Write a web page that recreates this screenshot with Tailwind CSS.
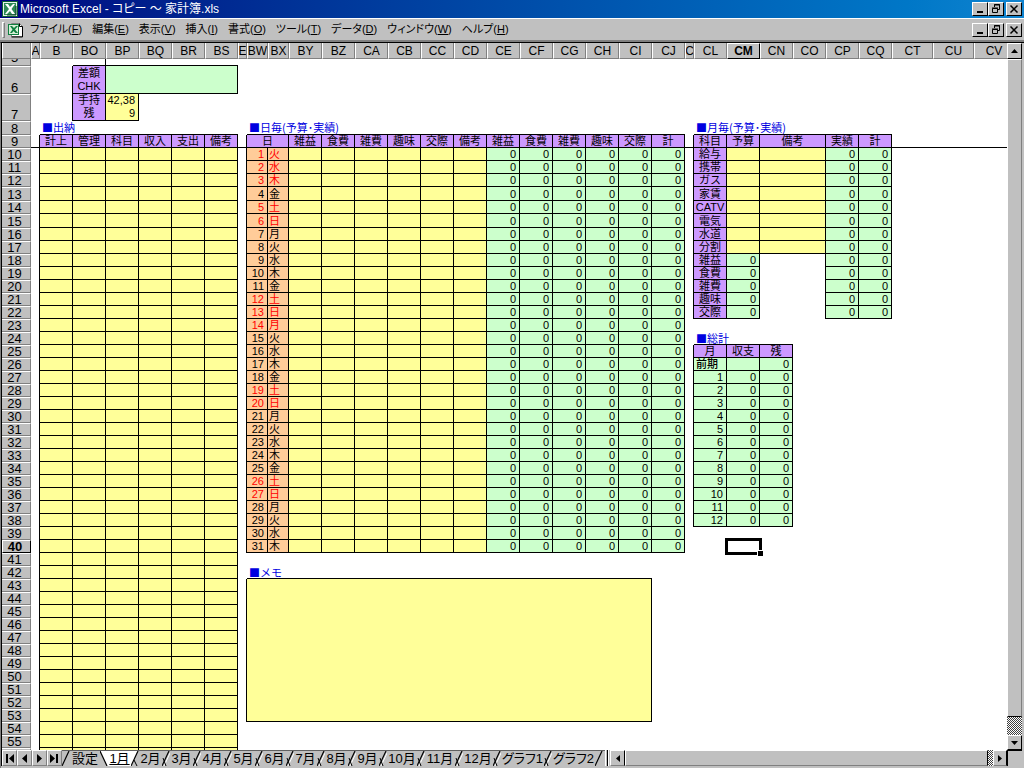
<!DOCTYPE html>
<html lang="ja">
<head>
<meta charset="utf-8">
<meta name="viewport" content="width=device-width, initial-scale=1">
<title>Microsoft Excel - 家計簿.xls</title>
<script src="https://cdn.jsdelivr.net/npm/@tailwindcss/browser@4"></script>
</head>
<body class="flex h-screen flex-col overflow-hidden bg-[#c0c0c0] font-['Liberation_Sans','Noto_Sans_CJK_JP',sans-serif] text-black">

<header class="flex h-[18px] shrink-0 items-center bg-linear-to-r from-[#000080] to-[#1084d0] pr-[2px] pl-[2px] text-white">
  <svg class="size-4 shrink-0" viewBox="0 0 16 16" aria-hidden="true">
    <rect width="16" height="16" fill="#0c5c34"/><rect x="1" y="1" width="14" height="14" fill="#e8f4e8"/>
    <rect x="2" y="2" width="12" height="12" fill="#2f8a57"/>
    <path d="M3 3h3l2 3 3-3h2L9.500 8l3.500 5h-3L8 10l-3 3H3l4-5z" fill="#fff"/>
    <path d="M14 5v9H5" fill="none" stroke="#083c20"/>
  </svg>
  <h1 class="ml-[2px] text-xs whitespace-nowrap [font-feature-settings:'palt']">Microsoft Excel - コピー ～ 家計簿.xls</h1>
  <div class="wbtns ml-auto flex"></div>
</header>

<nav class="flex h-6 shrink-0 items-center border-t border-b-2 border-t-white border-b-[#808080] pr-[2px] pl-[2px]">
  <span class="h-4 w-[3px] border border-t-white border-r-[#808080] border-b-[#808080] border-l-white"></span>
  <svg class="ml-[2px] h-4 w-[17px] shrink-0" viewBox="0 0 17 16" aria-hidden="true">
    <path d="M4.500 1.500h8l3 3v10h-11z" fill="#fff" stroke="#808080"/><path d="M12.500 1.500v3h3v10.500h-11" fill="none" stroke="#000"/>
    <rect x="1" y="2" width="11" height="11" fill="#108040"/><rect x="2" y="3" width="9" height="9" fill="#d8f0d8"/>
    <path d="M3 4h2l2 2 2-2h2L8 7.500 11 11H8.500L6.500 9 5 11H3l2.500-3.500z" fill="#108040"/>
  </svg>
  <div class="ml-[6px] flex gap-[10px] text-[11px] whitespace-nowrap [font-feature-settings:'palt']">
    <button type="button">ファイル(<span class="underline">F</span>)</button>
    <button type="button">編集(<span class="underline">E</span>)</button>
    <button type="button">表示(<span class="underline">V</span>)</button>
    <button type="button">挿入(<span class="underline">I</span>)</button>
    <button type="button">書式(<span class="underline">O</span>)</button>
    <button type="button">ツール(<span class="underline">T</span>)</button>
    <button type="button">データ(<span class="underline">D</span>)</button>
    <button type="button">ウィンドウ(<span class="underline">W</span>)</button>
    <button type="button">ヘルプ(<span class="underline">H</span>)</button>
  </div>
  <div class="wbtns ml-auto flex"></div>
</nav>

<main class="flex min-h-0 flex-1 border-t border-l border-t-black border-l-[#808080]">
  <div class="min-w-0 flex-1 overflow-hidden border-l border-black bg-white">
    <table id="sheet" class="w-full table-fixed border-separate border-spacing-0 text-[11px] leading-[12px] whitespace-nowrap"></table>
  </div>
  <div class="mr-[2px] flex w-[15px] flex-col bg-[repeating-conic-gradient(#ffffff_0_25%,#404040_0_50%)] bg-[length:2px_2px]">
    <button type="button" aria-label="上へ" class="flex h-4 w-full shrink-0 items-center justify-center border border-t-white border-r-black border-b-black border-l-white bg-[#c0c0c0]"><svg class="h-1 w-[7px]" viewBox="0 0 7 4"><path d="M0 4 3.500 0 7 4z"/></svg></button>
    <div class="flex-1 border border-t-white border-r-[#808080] border-b-black border-l-white bg-[#c0c0c0]"></div>
    <div class="h-[18px]"></div>
    <button type="button" aria-label="下へ" class="flex h-[15px] w-full shrink-0 items-center justify-center border border-t-white border-r-black border-b-black border-l-white bg-[#c0c0c0]"><svg class="h-1 w-[7px]" viewBox="0 0 7 4"><path d="M0 0 3.500 4 7 0z"/></svg></button>
  </div>
</main>

<footer class="flex h-[18px] shrink-0 border-l border-[#808080] pr-[2px] pb-[2px]">
  <div id="nav" class="flex border-l border-black"></div>
  <div id="tabs" class="flex w-[543px] shrink-0 border-t border-[#606060] text-[13px] leading-[15px] whitespace-nowrap [font-feature-settings:'palt']"></div>
  <span class="h-full w-[3px] border-r border-l border-r-black border-l-white"></span>
  <span class="h-full w-px bg-white"></span>
  <button type="button" aria-label="左へ" class="ml-px flex w-[15px] shrink-0 items-center justify-center border border-t-white border-r-black border-b-[#808080] border-l-white"><svg class="h-[7px] w-1" viewBox="0 0 4 7"><path d="M4 0 0 3.500 4 7z"/></svg></button>
  <div class="min-w-0 flex-1 border border-t-white border-r-black border-b-[#808080] border-l-white"></div>
  <span class="w-[5px] bg-[repeating-conic-gradient(#ffffff_0_25%,#404040_0_50%)] bg-[length:2px_2px]"></span>
  <button type="button" aria-label="右へ" class="flex w-[14px] shrink-0 items-center justify-center border border-t-white border-r-black border-b-[#808080] border-l-white"><svg class="h-[7px] w-1" viewBox="0 0 4 7"><path d="M0 0 4 3.500 0 7z"/></svg></button>
  <span class="w-[15px] border-t border-l border-black"></span>
</footer>

<script>
// Window buttons, shared by the title bar and the workbook's menu bar
const BTN = "flex h-[14px] w-4 items-center justify-center border border-t-white border-r-black border-b-black border-l-white bg-[#c0c0c0]";
const BTN_CLOSE = "ml-[2px] flex h-[14px] w-4 items-center justify-center border border-t-white border-r-black border-b-black border-l-white bg-[#c0c0c0]";
document.querySelectorAll(".wbtns").forEach(e => e.innerHTML =
  `<button type="button" aria-label="最小化" class="${BTN}"><svg class="size-[10px]" viewBox="0 0 10 10"><path d="M2 7h6v2H2z"/></svg></button>
   <button type="button" aria-label="元のサイズに戻す" class="${BTN}"><svg class="size-[10px]" viewBox="0 0 10 10" fill="none" stroke="#000"><path d="M3.500 3V.5h5v5H7M3 1h6M1.500 4.500h5v4h-5zM1 4h6"/></svg></button>
   <button type="button" aria-label="閉じる" class="${BTN_CLOSE}"><svg class="size-[10px]" viewBox="0 0 10 10"><path d="M1.500 1.500l7 7m0-7l-7 7" stroke="#000" stroke-width="1.500"/></svg></button>`);

// Sheet grid
const cols = [["A",9],["B",33],["BO",33],["BP",33],["BQ",33],["BR",33],["BS",33],["E",9],["BW",21],["BX",21],
  ["BY",33],["BZ",33],["CA",33],["CB",33],["CC",33],["CD",33],["CE",33],["CF",33],["CG",33],["CH",33],["CI",33],["CJ",33],["C",9],
  ["CL",33],["CM",33],["CN",33],["CO",33],["CP",33],["CQ",33],["CT",41],["CU",41],["CV",0]];
const CH = "h-4 overflow-hidden border-r border-b border-l border-r-[#808080] border-b-[#808080] border-l-white bg-[#c0c0c0] pt-px text-xs leading-[14px] font-normal";
const CH_LAST = "h-4 overflow-hidden border-b border-l border-b-[#808080] border-l-white bg-[#c0c0c0] pt-px pl-[6px] text-xs leading-[14px] font-normal";
const CH_ON = "h-4 border border-t-white border-r-black border-b-black border-l-white bg-[#c0c0c0] text-xs leading-[14px] font-bold";
const RH = "border-t border-r border-b border-t-white border-r-[#808080] border-b-[#808080] bg-[#c0c0c0] pr-[3px] text-center align-bottom text-[13px] leading-[11px] font-normal";
const RH_ON = "border border-t-white border-r-black border-b-black border-l-white bg-[#c0c0c0] pr-[3px] text-center align-bottom text-[13px] leading-[11px] font-bold";
const P = "border-r border-b border-black bg-[#cc99ff] text-center";
const Y = "border-r border-b border-black bg-[#ffff99]";
const G = "border-r border-b border-black bg-[#ccffcc] pr-[3px] text-right";
const O = "border-r border-b border-black bg-[#ffcc99] pr-[3px] text-right";
const OW = "border-r border-b border-black bg-[#ffcc99] pl-px text-left";
const O_RED = "border-r border-b border-black bg-[#ffcc99] pr-[3px] text-right text-[#ff0000]";
const OW_RED = "border-r border-b border-black bg-[#ffcc99] pl-px text-left text-[#ff0000]";
const R = "border-r border-black", B = "border-b border-black", RB = "border-r border-b border-black";
const LABEL = "border-b border-black pl-[2px] text-left align-top leading-[12px] font-['Noto_Sans_CJK_JP',sans-serif] text-[#0000e0]";
const td = (c = "", t = "", n = 1, rs = 1) => `<td class="${c}" colspan="${n}" rowspan="${rs}">${t}</td>`;
const rep = (n, c, t = "") => td(c, t).repeat(n);
const list = (a, c) => a.map(t => td(c, t)).join("");

let h = `<colgroup><col class="w-[29px]">` + cols.map(c => c[1] ? `<col style="width:${c[1]}px">` : "<col>").join("") + "</colgroup>";
h += `<thead><tr><td class="${CH}"></td>` + cols.map(c => `<th scope="col" class="${c[0] === "CM" ? CH_ON : c[1] ? CH : CH_LAST}"><span class="flex justify-center">${c[0]}</span></th>`).join("") + "</tr></thead><tbody>";
const row = (n, px, body) => h += `<tr style="height:${px}px"><th scope="row" class="${n === 40 ? RH_ON : RH}">${n}</th>${body}</tr>`;

h += `<tr class="h-[7px]"><th class="border-r border-b border-r-[#808080] border-b-[#808080] bg-[#c0c0c0] pr-[3px] text-[13px] font-normal"><span class="flex h-[6px] items-end justify-center overflow-hidden leading-[15px]">5</span></th>`
  + td("", "", 2) + td(RB) + td(B, "", 4) + td("", "", 25) + "</tr>";
row(6, 28, td() + td(R) + td("border-r border-b border-black bg-[#cc99ff] text-center leading-[13px]", "差額<br>CHK") + td(G, "", 4) + td("", "", 25));
row(7, 27, td() + td(R) + td("border-r border-b border-black bg-[#cc99ff] text-center leading-[13px]", "手持<br>残")
  + td("border-r border-b border-black bg-[#ffff99] pr-[3px] text-right leading-[13px]", "42,38<br>9") + td("", "", 28));
row(8, 14, td() + td(LABEL, "■出納", 6) + td() + td(LABEL, "■日毎(予算･実績)", 14) + td() + td(LABEL, "■月毎(予算･実績)", 6) + td("", "", 3));
row(9, 13, td(RB) + list(["計上","管理","科目","収入","支出","備考"], P) + td(RB) + td(P, "日", 2)
  + list(["雑益","食費","雑費","趣味","交際","備考","雑益","食費","雑費","趣味","交際","計"], P) + td(RB)
  + list(["科目","予算"], P) + td(P, "備考", 2) + list(["実績","計"], P) + td(B, "", 3));

const week = ["火","水","木","金","土","日","月"], holidays = [1,2,3,5,6,12,13,14,19,20,26,27];
const items = ["給与","携帯","ガス","家賃","CATV","電気","水道","分割","雑益","食費","雑費","趣味","交際"];
const SEL = "relative";
const cursor = `<span class="absolute -inset-[2px] border-[3px] border-black"></span><span class="absolute -right-[3px] -bottom-[3px] size-[6px] border-t border-l border-white bg-black"></span>`;
for (let n = 10; n <= 56; n++) {
  let b = td(R) + rep(6, Y);
  // Daily ledger, then the memo box beneath it
  if (n <= 40) {
    const d = n - 9, red = holidays.includes(d);
    b += td(R) + td(red ? O_RED : O, d) + td(red ? OW_RED : OW, week[(d - 1) % 7]) + rep(6, Y) + rep(6, G, "0");
  } else if (n === 42) b += td() + td(LABEL, "■メモ", 13) + td();
  else if (n === 43) b += td(R) + td(Y, "", 13, 11) + td();
  else if (n > 43 && n <= 53) b += td(R) + td();
  else b += td("", "", 15);
  // Monthly items, then the yearly totals
  if (n <= 22) {
    b += td(R) + td(P, items[n - 10]) + (n <= 17 ? td(Y) + td(Y, "", 2) : td(G, "0") + td(R, "", 2)) + rep(2, G, "0") + td("", "", 3);
  } else if (n === 24) b += td() + td(LABEL, "■総計", 3) + td("", "", 6);
  else if (n === 25) b += td(R) + list(["月","収支","残"], P) + td("", "", 6);
  else if (n === 26) b += td(R) + td("border-r border-b border-black bg-[#ccffcc] pl-[2px] text-left font-medium", "前期") + td(G) + td(G, "0") + td("", "", 6);
  else if (n > 26 && n <= 38) b += td(R) + td(G, n - 26) + td(G, "0") + td(G, "0") + td("", "", 6);
  else if (n === 40) b += td() + td() + td(SEL, cursor) + td("", "", 7);
  else b += td("", "", 10);
  row(n, n === 13 || n === 15 ? 14 : 13, b);
}
document.getElementById("sheet").innerHTML = h + "</tbody>";

// Sheet navigation and tabs
const NB = "flex w-[15px] items-center justify-center border border-t-white border-r-[#808080] border-b-[#808080] border-l-white";
document.getElementById("nav").innerHTML = [["先頭", "M1 0h2v9H1zM9 0v9L4 4.500z"], ["前へ", "M7 0v9L2 4.500z"], ["次へ", "M2 0v9l5-4.500z"], ["末尾", "M0 0v9l5-4.500zM6 0h2v9H6z"]]
  .map(([l, d]) => `<button type="button" aria-label="${l}" class="${NB}"><svg class="size-[9px]" viewBox="0 0 9 9"><path d="${d}"/></svg></button>`).join("");
const slash = (extra, d = "M0 15 7 0") => `<svg class="h-[15px] w-2 shrink-0" viewBox="0 0 8 15">${extra}<path d="${d}" stroke="#000" stroke-width="1.200"/></svg>`;
const hi = `<path d="M2 15 8 2" stroke="#fff"/><path d="M1 7l3 8" stroke="#000"/>`;
const names = ["設定", ...Array.from({ length: 12 }, (_, i) => (i + 1) + "月"), "グラフ1", "グラフ2"];
const T = { s: "flex w-[23px] shrink-0 justify-center", m: "flex w-[30px] shrink-0 justify-center", l: "flex w-[43px] shrink-0 justify-center", on: "flex w-[23px] shrink-0 justify-center bg-white underline" };
document.getElementById("tabs").innerHTML = names.map((t, i) => {
  const sep = i === 1 ? slash(`<path d="M0 0h8v15H7z" fill="#fff"/>`, "M0 0 7 15") : i === 2 ? slash(`<path d="M0 0h7L0 15z" fill="#fff"/><path d="M3 9l3 6" stroke="#000"/>`) : slash(i ? hi : "");
  const k = i === 1 ? T.on : i === 0 || (i > 9 && i < 13) ? T.m : i > 12 ? T.l : T.s;
  return sep + `<button type="button" class="${k}">${t}</button>`;
}).join("") + slash("");
</script>
</body>
</html>
